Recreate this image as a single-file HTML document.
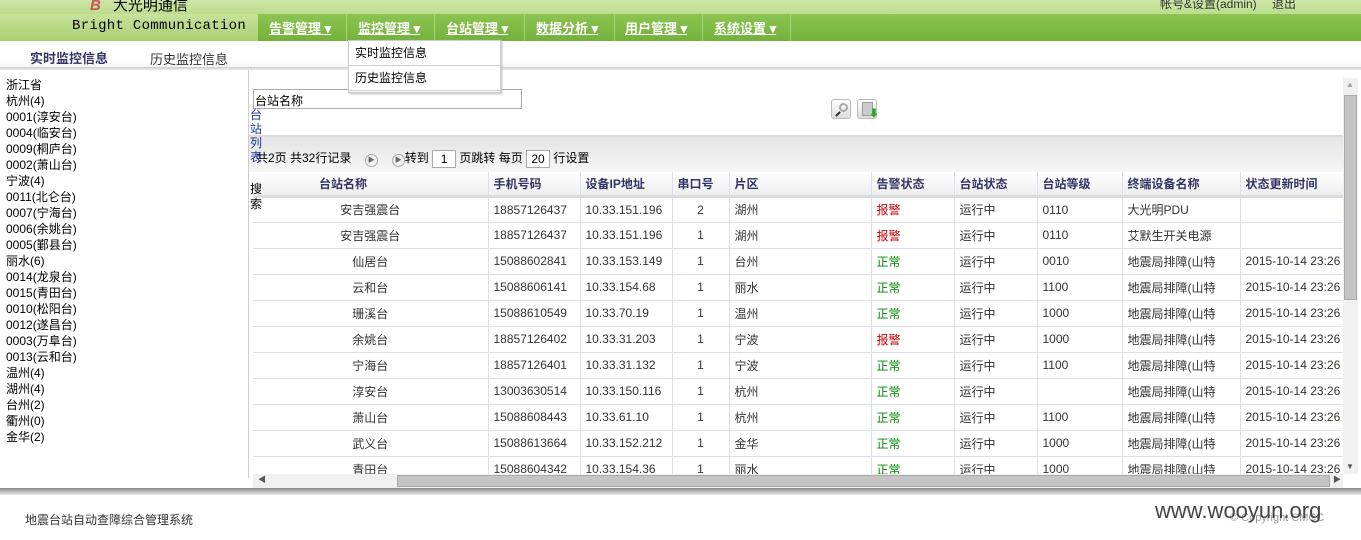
<!DOCTYPE html>
<html><head><meta charset="utf-8">
<style>
*{margin:0;padding:0;box-sizing:border-box}
body{width:1361px;height:540px;overflow:hidden;background:#fff;font-family:"Liberation Sans","Noto Sans CJK SC",sans-serif;font-size:12px;color:#000;position:relative}
.abs{position:absolute}
#top{left:0;top:0;width:1361px;height:14px;background:linear-gradient(#cfe6a8,#bcdc8c)}
#hdr{left:0;top:14px;width:1361px;height:27px;background:linear-gradient(#c8e29c,#a9d070)}
#nav{left:258px;top:14px;width:1103px;height:27px;background:linear-gradient(#8cc452,#73b23a)}
.ni{position:absolute;top:4px;color:#fff;font-size:13px;font-weight:bold;text-decoration:underline;white-space:nowrap}
.sep{position:absolute;top:0;width:1px;height:27px;background:#a6d57a}
#logo1{left:90px;top:-6px;font-size:15px}
#logo2{left:72px;top:18px;font-family:"Liberation Mono","DejaVu Sans Mono",monospace;font-size:14px;letter-spacing:0.3px}
#dd{left:348px;top:40px;width:153px;height:53px;background:#fff;border:1px solid #ccc;box-shadow:1px 1px 2px #bbb;z-index:5}
#dd div{height:25px;line-height:25px;padding-left:6px;border-bottom:1px solid #ccc}
#sub{left:0;top:41px;width:1361px;height:27px;background:linear-gradient(#fff 80%,#eee)}
#subline{left:0;top:67px;width:1361px;height:3px;background:linear-gradient(#ccc,#eee)}
#tree{left:6px;top:77px;line-height:16px;font-size:12px}
#vline{left:248px;top:70px;width:1px;height:408px;background:#ccc}
#gray{left:249px;top:135px;width:1094px;height:37px;background:linear-gradient(#e4e4e4,#f6f6f6);border-top:2px solid #ddd}
table{position:absolute;left:253px;top:172px;border-collapse:collapse;table-layout:fixed;width:1090px}
td,th{height:26px;border-right:1px solid #dde;border-bottom:1px solid #dde;white-space:nowrap;overflow:hidden;padding-left:5px;font-size:12px;color:#333}
th{background:linear-gradient(#fff,#eee);color:#333366;font-weight:bold;text-align:left;padding-left:5px;height:24px;border-bottom:3px solid #dcdcdc}
.c{text-align:center;padding-left:0}
.r{color:#c00}.g{color:#080}
#hs{left:253px;top:474px;width:1090px;height:14px;background:#f0f0f0}
#hthumb{left:397px;top:475px;width:933px;height:12px;background:#c4c4c4;border:1px solid #aaa}
#vs{left:1343px;top:78px;width:15px;height:396px;background:#f0f0f0}
#vthumb{left:1344px;top:95px;width:13px;height:205px;background:#c4c4c4;border:1px solid #aaa}
#foot{left:0;top:488px;width:1361px;height:7px;background:linear-gradient(#888,#eee)}
</style></head><body>
<div class="abs" id="top"></div>
<div class="abs" id="hdr"></div>
<div class="abs" id="logo1"><span style="color:#c55;font-style:italic;font-weight:bold;margin-right:12px">B</span>大光明通信</div>
<div class="abs" id="logo2">Bright Communication</div>
<div class="abs" style="left:1160px;top:-5px;color:#333">帐号&amp;设置(admin)　 退出</div>
<div class="abs" id="nav">
<span class="ni" style="left:11px">告警管理 ▾</span><div class="sep" style="left:88px"></div>
<span class="ni" style="left:100px">监控管理 ▾</span><div class="sep" style="left:176px"></div>
<span class="ni" style="left:188px">台站管理 ▾</span><div class="sep" style="left:266px"></div>
<span class="ni" style="left:278px">数据分析 ▾</span><div class="sep" style="left:356px"></div>
<span class="ni" style="left:367px">用户管理 ▾</span><div class="sep" style="left:444px"></div>
<span class="ni" style="left:456px">系统设置 ▾</span><div class="sep" style="left:532px"></div>
</div>
<div class="abs" id="sub"></div>
<div class="abs" style="left:30px;top:48px;font-size:13px;font-weight:bold;color:#333366">实时监控信息</div>
<div class="abs" style="left:150px;top:49px;font-size:13px;color:#333">历史监控信息</div>
<div class="abs" id="subline"></div>
<div class="abs" id="tree">浙江省<br>杭州(4)<br>0001(淳安台)<br>0004(临安台)<br>0009(桐庐台)<br>0002(萧山台)<br>宁波(4)<br>0011(北仑台)<br>0007(宁海台)<br>0006(余姚台)<br>0005(鄞县台)<br>丽水(6)<br>0014(龙泉台)<br>0015(青田台)<br>0010(松阳台)<br>0012(遂昌台)<br>0003(万阜台)<br>0013(云和台)<br>温州(4)<br>湖州(4)<br>台州(2)<br>衢州(0)<br>金华(2)</div>
<div class="abs" id="vline"></div>
<div class="abs" style="left:253px;top:89px;width:269px;height:20px;border:1px solid #aaa;padding:2px 0 0 1px;font-size:12px">台站名称</div>
<div class="abs" id="gray"></div>
<div class="abs" style="left:256px;top:150px;line-height:16px">共2页 共32行记录 <span style="display:inline-block;width:13px;height:13px;border:1px solid #aaa;border-radius:50%;font-size:7px;text-align:center;line-height:11px;color:#666;margin:0 14px 0 10px">▶</span><span style="display:inline-block;width:13px;height:13px;border:1px solid #aaa;border-radius:50%;font-size:7px;text-align:center;line-height:11px;color:#666">▶</span>转到 <span style="display:inline-block;width:24px;height:18px;border:1px solid #aaa;background:#fff;text-align:center;vertical-align:middle">1</span> 页跳转 每页 <span style="display:inline-block;width:24px;height:18px;border:1px solid #aaa;background:#fff;text-align:center;vertical-align:middle">20</span> 行设置</div>
<div class="abs" style="left:831px;top:99px;width:20px;height:20px;border:1px solid #bbb;border-radius:3px;background:linear-gradient(#fff,#ddd)"><div style="position:absolute;left:7px;top:3px;width:9px;height:9px;border:2px solid #aaa;border-radius:50%"></div><div style="position:absolute;left:3px;top:13px;width:6px;height:2px;background:#333;transform:rotate(-45deg)"></div></div>
<div class="abs" style="left:857px;top:99px;width:20px;height:20px;border:1px solid #bbb;border-radius:3px;background:linear-gradient(#fff,#ddd)"><div style="position:absolute;left:4px;top:2px;width:11px;height:14px;background:#ccc;border:1px solid #999"></div><div style="position:absolute;left:11px;top:11px;color:#2a2;font-size:10px;line-height:8px">⬇</div></div>
<table>
<colgroup><col style="width:235px"><col style="width:92px"><col style="width:92px"><col style="width:57px"><col style="width:142px"><col style="width:83px"><col style="width:83px"><col style="width:85px"><col style="width:118px"><col style="width:103px"></colgroup>
<tr><th style="padding-left:66px">台站名称</th><th>手机号码</th><th>设备IP地址</th><th>串口号</th><th>片区</th><th>告警状态</th><th>台站状态</th><th>台站等级</th><th>终端设备名称</th><th>状态更新时间</th></tr>
<tr><td class="c">安吉强震台</td><td>18857126437</td><td>10.33.151.196</td><td class="c">2</td><td>湖州</td><td class="r">报警</td><td>运行中</td><td>0110</td><td>大光明PDU</td><td></td></tr>
<tr><td class="c">安吉强震台</td><td>18857126437</td><td>10.33.151.196</td><td class="c">1</td><td>湖州</td><td class="r">报警</td><td>运行中</td><td>0110</td><td>艾默生开关电源</td><td></td></tr>
<tr><td class="c">仙居台</td><td>15088602841</td><td>10.33.153.149</td><td class="c">1</td><td>台州</td><td class="g">正常</td><td>运行中</td><td>0010</td><td>地震局排障(山特</td><td>2015-10-14 23:26</td></tr>
<tr><td class="c">云和台</td><td>15088606141</td><td>10.33.154.68</td><td class="c">1</td><td>丽水</td><td class="g">正常</td><td>运行中</td><td>1100</td><td>地震局排障(山特</td><td>2015-10-14 23:26</td></tr>
<tr><td class="c">珊溪台</td><td>15088610549</td><td>10.33.70.19</td><td class="c">1</td><td>温州</td><td class="g">正常</td><td>运行中</td><td>1000</td><td>地震局排障(山特</td><td>2015-10-14 23:26</td></tr>
<tr><td class="c">余姚台</td><td>18857126402</td><td>10.33.31.203</td><td class="c">1</td><td>宁波</td><td class="r">报警</td><td>运行中</td><td>1000</td><td>地震局排障(山特</td><td>2015-10-14 23:26</td></tr>
<tr><td class="c">宁海台</td><td>18857126401</td><td>10.33.31.132</td><td class="c">1</td><td>宁波</td><td class="g">正常</td><td>运行中</td><td>1100</td><td>地震局排障(山特</td><td>2015-10-14 23:26</td></tr>
<tr><td class="c">淳安台</td><td>13003630514</td><td>10.33.150.116</td><td class="c">1</td><td>杭州</td><td class="g">正常</td><td>运行中</td><td></td><td>地震局排障(山特</td><td>2015-10-14 23:26</td></tr>
<tr><td class="c">萧山台</td><td>15088608443</td><td>10.33.61.10</td><td class="c">1</td><td>杭州</td><td class="g">正常</td><td>运行中</td><td>1100</td><td>地震局排障(山特</td><td>2015-10-14 23:26</td></tr>
<tr><td class="c">武义台</td><td>15088613664</td><td>10.33.152.212</td><td class="c">1</td><td>金华</td><td class="g">正常</td><td>运行中</td><td>1000</td><td>地震局排障(山特</td><td>2015-10-14 23:26</td></tr>
<tr><td class="c">青田台</td><td>15088604342</td><td>10.33.154.36</td><td class="c">1</td><td>丽水</td><td class="g">正常</td><td>运行中</td><td>1000</td><td>地震局排障(山特</td><td>2015-10-14 23:26</td></tr>
</table>
<div class="abs" style="left:250px;top:108px;width:14px;line-height:14px;color:#1a3a99;z-index:4">台站列表</div>
<div class="abs" style="left:250px;top:182px;width:14px;line-height:15px;z-index:4">搜索</div>
<div class="abs" style="left:249px;top:474px;width:1112px;height:14px;background:#fff"></div>
<div class="abs" id="hs"></div>
<div class="abs" style="left:258px;top:474px;font-size:8px;color:#555">◀</div>
<div class="abs" style="left:1333px;top:474px;font-size:8px;color:#555">▶</div>
<div class="abs" id="hthumb"></div>
<div class="abs" id="vs"></div>
<div class="abs" style="left:1346px;top:80px;font-size:8px;color:#999">▲</div>
<div class="abs" style="left:1346px;top:462px;font-size:8px;color:#555">▼</div>
<div class="abs" id="vthumb"></div>
<div class="abs" id="dd"><div>实时监控信息</div><div>历史监控信息</div></div>
<div class="abs" id="foot"></div>
<div class="abs" style="left:25px;top:511px;color:#333">地震台站自动查障综合管理系统</div>
<div class="abs" style="left:1230px;top:512px;color:#999;font-size:11px">© Copyright CMCC</div>
<div class="abs" style="left:1155px;top:498px;font-size:22px;color:#444">www.wooyun.org</div>
</body></html>
